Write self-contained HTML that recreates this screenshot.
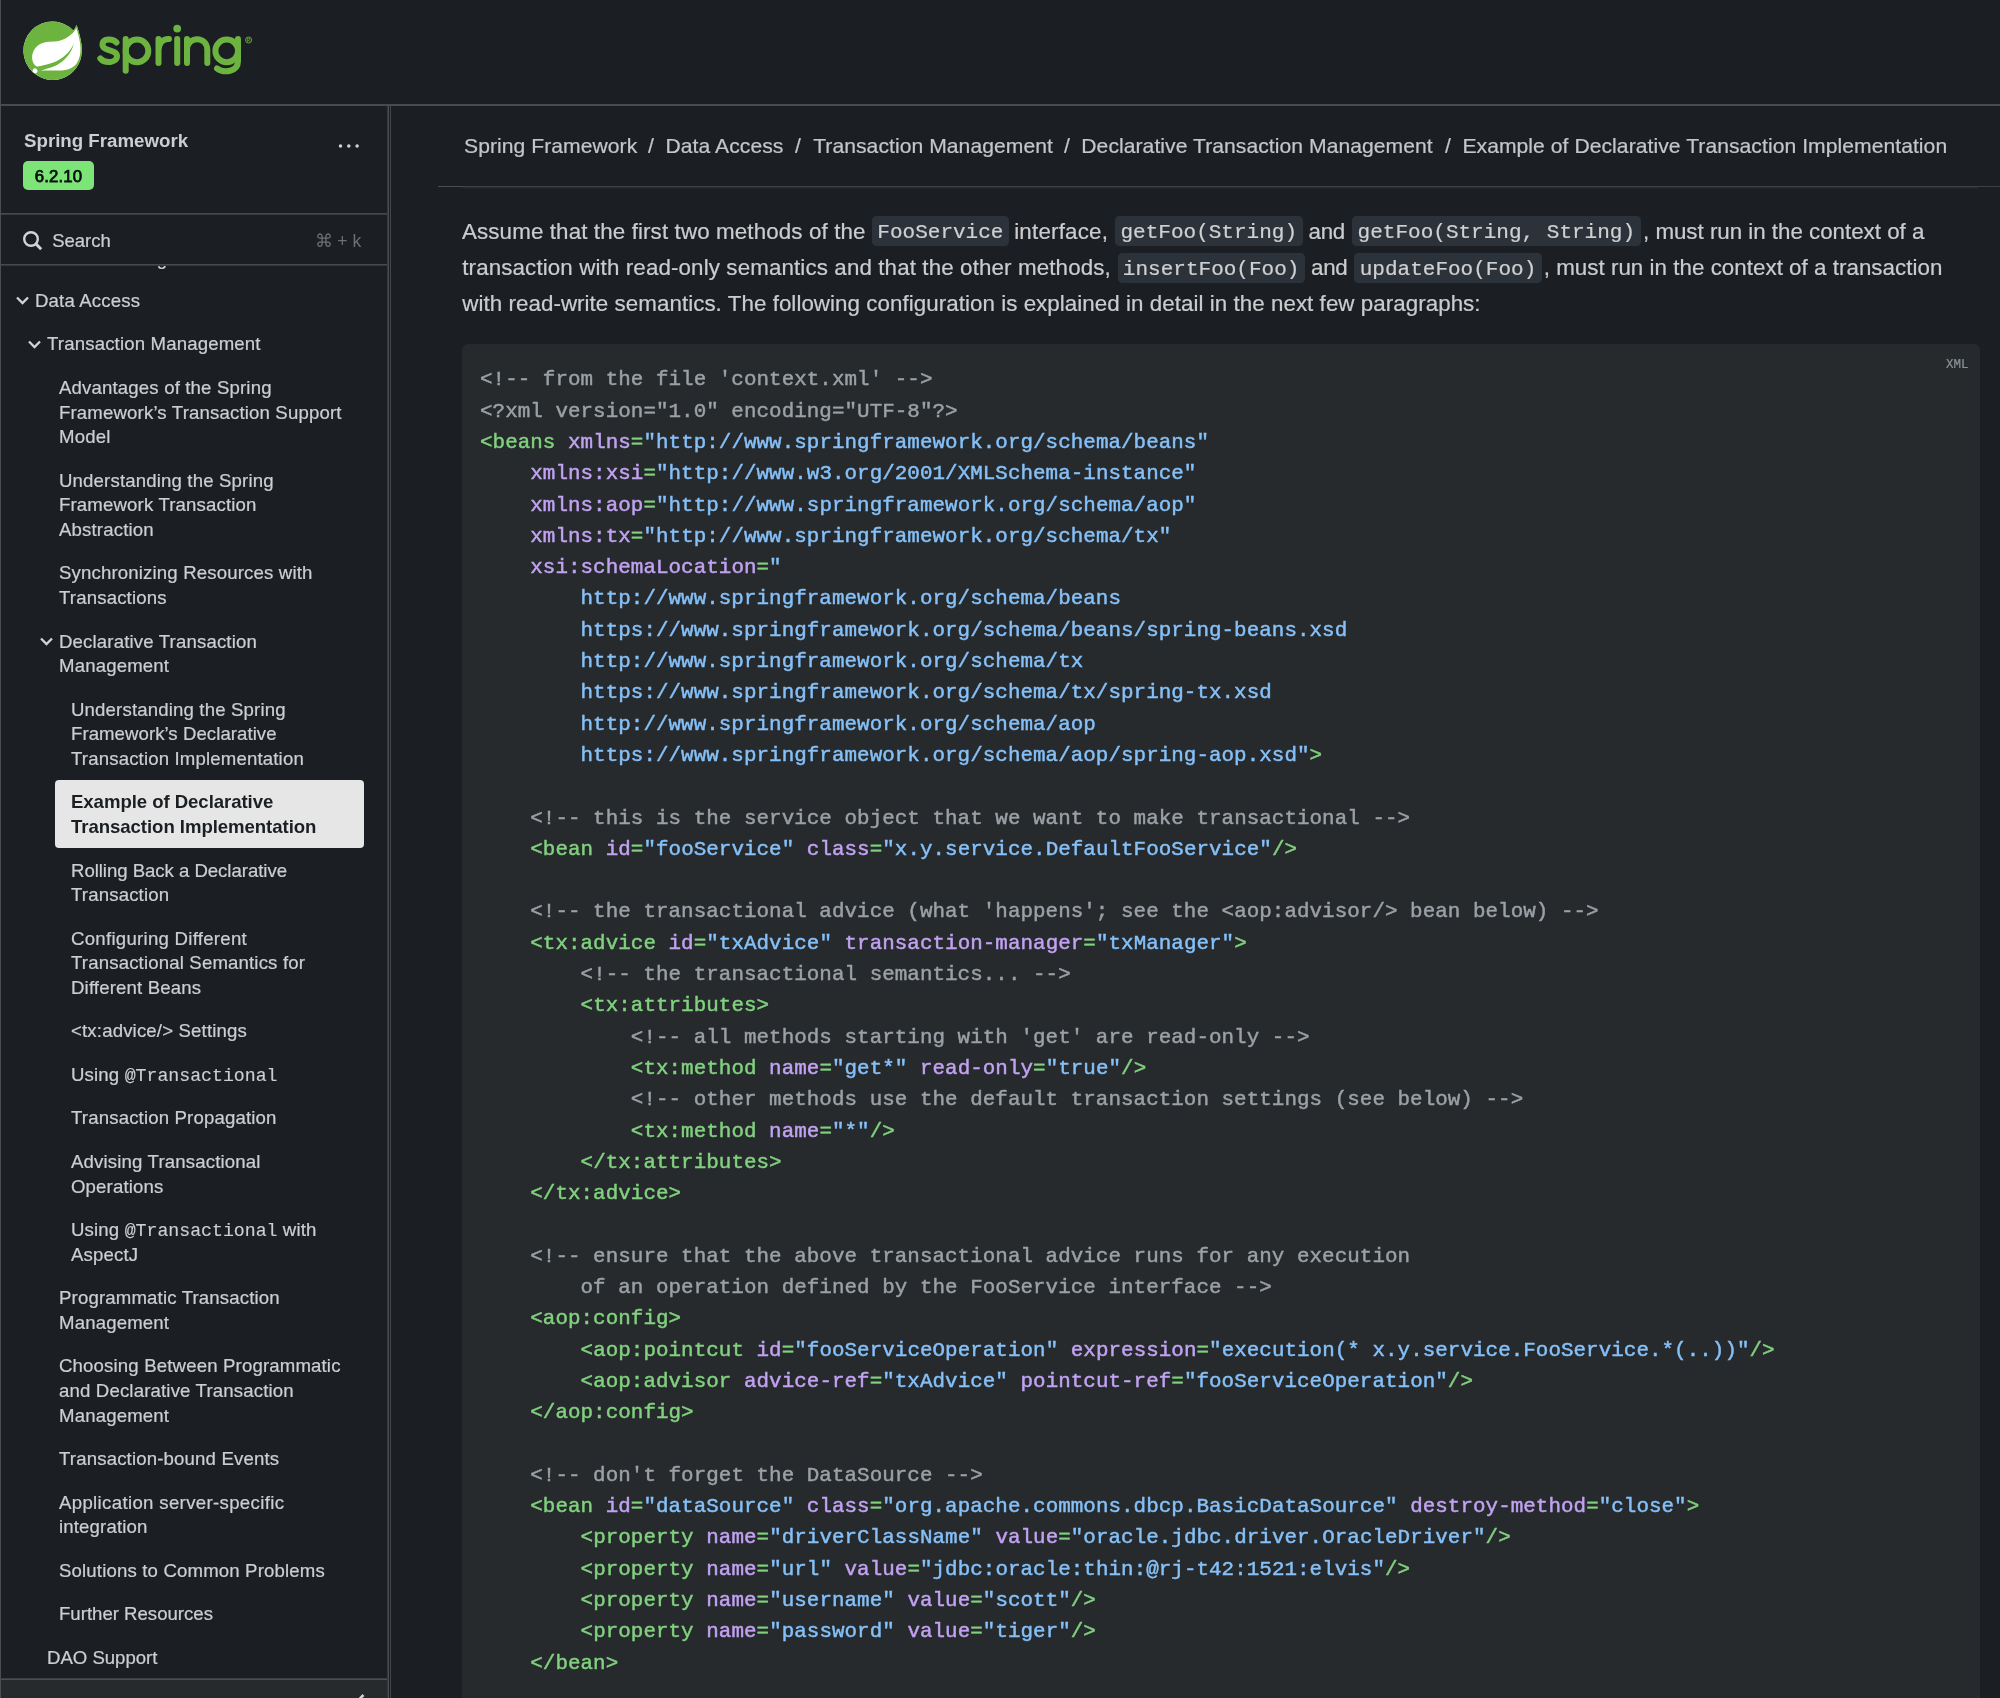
<!DOCTYPE html>
<html lang="en">
<head>
<meta charset="utf-8">
<title>Example of Declarative Transaction Implementation :: Spring Framework</title>
<style>
*{box-sizing:border-box;margin:0;padding:0}
html,body{width:2000px;height:1698px;overflow:hidden;background:#1b1f23}
body{position:relative;will-change:transform;-webkit-text-stroke:.22px;font-family:"Liberation Sans",sans-serif;color:#d3d4d6}
.abs{position:absolute}
/* ---------- frame lines ---------- */
#edge{left:0;top:0;width:1px;height:1698px;background:#4a4e52}
#hdr{left:0;top:0;width:2000px;height:104px}
#hdrline{left:0;top:104px;width:2000px;height:2px;background:#474b4f}
#vline1{left:387px;top:106px;width:2px;height:1592px;background:linear-gradient(to right,#34383c 0,#34383c 1px,#4b4f53 1px,#4b4f53 2px)}
#vline2{left:390px;top:106px;width:1px;height:1592px;background:#43474b}
/* ---------- sidebar ---------- */
#side{left:1px;top:106px;width:386px;height:1592px;overflow:hidden}
#side .title{left:23px;top:21.8px;font-size:18.7px;font-weight:bold;-webkit-text-stroke:0;color:#cdced0;white-space:nowrap;line-height:26px}
#side .badge{left:22px;top:55px;width:71px;height:28.5px;border-radius:5px;background:#7de578;color:#0c0f11;font-weight:normal;-webkit-text-stroke:.75px;font-size:16.8px;letter-spacing:.1px;line-height:32px;text-align:center}
#side .dots{left:336.7px;top:36.5px}
#side .sep1{left:0;top:107px;width:386px;height:2px;background:linear-gradient(#45494d 0,#45494d 1px,#383c40 1px,#383c40 2px)}
#side .sep2{left:0;top:158px;width:386px;height:2px;background:linear-gradient(#464a4e 0,#464a4e 1px,#34383c 1px,#34383c 2px)}
#side .search{left:51.2px;top:122px;font-size:18.5px;line-height:26px;color:#cdced0;white-space:nowrap}
#side .kbd{left:313.5px;top:122px;font-size:17.5px;line-height:26px;color:#6b7075;-webkit-text-stroke:0;white-space:nowrap}
#side .mag{left:19.4px;top:122.1px}
#nav{left:0;top:159.5px;width:386px;height:1414px;overflow:hidden}
#nav ul{list-style:none;position:absolute;left:0;top:-29.5px;width:386px;z-index:0}
#nav li{position:relative;font-size:18.6px;letter-spacing:.16px;line-height:24.62px;padding:9.45px 0;color:#cdced0;white-space:nowrap}
#nav li.l1{padding-left:34px}
#nav li.l2{padding-left:46px}
#nav li.l3{padding-left:58px}
#nav li.l4{padding-left:70px}
#nav li svg{position:absolute;top:13.6px}
#nav li.active{color:#1b1f23;font-weight:bold;letter-spacing:-.06px;-webkit-text-stroke:0}
#nav li.active:before{content:"";position:absolute;left:54px;top:-1px;width:309px;height:67.6px;border-radius:4px;background:#e6e6e6;z-index:-1}
#nav code{font-family:"Liberation Mono",monospace;font-size:18.2px;-webkit-text-stroke:.15px;line-height:0;letter-spacing:0}
#sfoot{left:0;top:1572px;width:386px;height:20px;background:linear-gradient(#3a3e42 0,#3a3e42 1px,#4b4f53 1px,#4b4f53 2px,#262a2d 2px)}
/* ---------- main ---------- */
#crumbs{left:438px;top:106px;width:1562px;height:81px}
#crumbline{left:438px;top:186px;width:1562px;height:1px;background:linear-gradient(to right,#4a4e52 0,#4a4e52 25px,#3d4145 25px)}
#crumbshadow{left:463px;top:187px;width:1515px;height:2px;background:linear-gradient(#2a2e32 0,#2a2e32 1px,#202428 1px)}
#crumbs span{position:absolute;top:26.7px;font-size:21.1px;letter-spacing:.06px;line-height:26px;color:#c5c6c8;white-space:nowrap}
#para span,#para code{position:absolute;white-space:pre}
#para span{font-size:22.35px;line-height:36px;color:#cbccce}
#para code{font-family:"Liberation Mono",monospace;font-size:21.03px;line-height:33.8px;height:30px;text-align:center;background:#2c323a;border-radius:4.5px;color:#cfd0d2}
#para .l1{top:213.7px}#para .l2{top:250px}#para .l3{top:286.45px}
#para code.l1{top:216.3px}#para code.l2{top:252.7px}
#codeblk{left:462px;top:344px;width:1518px;height:1360px;background:#262a2d;border-radius:6px}
#codeblk pre{position:absolute;left:18px;top:20.4px;font-family:"Liberation Mono",monospace;font-size:20.86px;letter-spacing:.051px;line-height:31.29px;-webkit-text-stroke:.45px;color:#9ba1a7;white-space:pre}
#codeblk .lang{position:absolute;right:11.5px;top:12.5px;font-family:"Liberation Mono",monospace;font-size:12.5px;line-height:16px;color:#8b9096}
.c{color:#9ba1a7}.t{color:#82d17f}.a{color:#c2a2f2}.s{color:#86c0f8}
</style>
</head>
<body>
<div id="edge" class="abs"></div>
<div id="hdr" class="abs">
<svg class="abs" style="left:0;top:0" width="280" height="104" viewBox="0 0 280 104">
<g id="leaf" transform="translate(23.4,21.55) scale(2.435)">
<path fill="#fff" d="M21.8537 1.4158a10.4504 10.4504 0 0 1-1.284 2.2471A11.9666 11.9666 0 1 0 3.8518 20.7757l.4445.3951a11.9543 11.9543 0 0 0 19.6316-8.2971c.3457-3.0126-.568-6.8649-2.0743-11.458z"/>
<path fill="#6db33f" d="M21.8537 1.4158a10.4504 10.4504 0 0 1-1.284 2.2471A11.9666 11.9666 0 1 0 3.8518 20.7757l.4445.3951a11.9543 11.9543 0 0 0 19.6316-8.2971c.3457-3.0126-.568-6.8649-2.0743-11.458zM5.5805 20.8745a1.0174 1.0174 0 1 1-.1482-1.4323 1.0396 1.0396 0 0 1 .1482 1.4323zm16.1991-3.5806c-2.9385 3.9263-9.2601 2.5928-13.2852 2.7904 0 0-.7161.0494-1.4323.1481 0 0 .2717-.1234.6174-.2469 2.8398-.9877 4.1732-1.1853 5.9018-2.0743 3.2349-1.6545 6.4698-5.2844 7.1118-9.0379-1.2347 3.6053-4.9881 6.7167-8.3959 7.9761-2.3459.8643-6.5685 1.7039-6.5685 1.7039l-.1729-.0988c-2.8645-1.4076-2.9632-7.6304 2.2718-9.6306 2.2966-.889 4.4696-.395 6.9637-.9877 2.6422-.6174 5.7043-2.5929 6.939-5.1857 1.3828 4.1732 3.062 10.643.0493 14.6434z"/>
</g>
<g id="word" fill="none" stroke="#6db33f" stroke-width="6" stroke-linecap="round" stroke-linejoin="round">
<path d="M116.5 42.5c-3-3.6-13.5-5-14 1.8c-.5 7.5 14.5 4.500 14.500 11.7c0 7.500-12.500 7.500-16.700 2.500"/>
<path d="M125.700 39v31.700"/><circle cx="137" cy="50.900" r="11.300"/>
<path d="M158.500 39v24M158.500 50c0-7 5-11.500 10.500-11"/>
<path d="M177.200 39v24"/>
<path d="M187 39v24M187 50c0-14.500 20.300-14.500 20.300 0v13"/>
<circle cx="226.700" cy="50.900" r="11.300"/><path d="M238 39v22c0 11-14 12.500-21 7.500"/>
</g>
<circle cx="177.200" cy="28.600" r="3.900" fill="#6db33f"/>
<circle cx="248.600" cy="40" r="3" fill="none" stroke="#6db33f" stroke-width="0.9"/>
<path d="M247.600 41.700v-3.400h1.200a1 1 0 0 1 0 2h-1.200m1.200 0l1 1.400" fill="none" stroke="#6db33f" stroke-width="0.700"/>
</svg>
</div>
<div id="hdrline" class="abs"></div>
<div id="vline1" class="abs"></div>
<div id="vline2" class="abs"></div>

<div id="side" class="abs">
<div class="abs title">Spring Framework</div>
<svg class="abs dots" width="24" height="6" viewBox="0 0 24 6"><circle cx="2.500" cy="3" r="1.750" fill="#d3d4d6"/><circle cx="10.800" cy="3" r="1.750" fill="#d3d4d6"/><circle cx="19.100" cy="3" r="1.750" fill="#d3d4d6"/></svg>
<div class="abs badge">6.2.10</div>
<div class="abs sep1"></div>
<svg class="abs mag" width="26" height="26" viewBox="0 0 26 26" fill="none" stroke="#d3d4d6" stroke-width="2.400"><circle cx="11" cy="11" r="6.800"/><path d="M15.800 15.800l5.400 5.400" stroke-width="3"/></svg>
<div class="abs search">Search</div>
<div class="abs kbd">&#8984; + k</div>
<div class="abs sep2"></div>
<div id="nav" class="abs">
<ul>
<li class="l1" style="top:1.500px">Core Technologies</li>
<li class="l1"><svg style="left:14.100px" width="15" height="15" viewBox="0 0 15 15" fill="none" stroke="#d3d4d6" stroke-width="2.300"><path d="M2 4.500l5.500 5.500l5.500-5.500"/></svg>Data Access</li>
<li class="l2"><svg style="left:26.100px" width="15" height="15" viewBox="0 0 15 15" fill="none" stroke="#d3d4d6" stroke-width="2.300"><path d="M2 4.500l5.500 5.500l5.500-5.500"/></svg>Transaction Management</li>
<li class="l3">Advantages of the Spring<br>Framework&rsquo;s Transaction Support<br>Model</li>
<li class="l3">Understanding the Spring<br>Framework Transaction<br>Abstraction</li>
<li class="l3">Synchronizing Resources with<br>Transactions</li>
<li class="l3"><svg style="left:38.100px" width="15" height="15" viewBox="0 0 15 15" fill="none" stroke="#d3d4d6" stroke-width="2.300"><path d="M2 4.500l5.500 5.500l5.500-5.500"/></svg>Declarative Transaction<br>Management</li>
<li class="l4">Understanding the Spring<br><span style="letter-spacing:.06px">Framework&rsquo;s Declarative</span><br>Transaction Implementation</li>
<li class="l4 active">Example of Declarative<br>Transaction Implementation</li>
<li class="l4"><span style="letter-spacing:-.04px">Rolling Back a Declarative</span><br>Transaction</li>
<li class="l4"><span style="letter-spacing:.275px">Configuring Different</span><br>Transactional Semantics for<br>Different Beans</li>
<li class="l4">&lt;tx:advice/&gt; Settings</li>
<li class="l4">Using <code>@Transactional</code></li>
<li class="l4">Transaction Propagation</li>
<li class="l4">Advising Transactional<br>Operations</li>
<li class="l4">Using <code>@Transactional</code> with<br>AspectJ</li>
<li class="l3">Programmatic Transaction<br>Management</li>
<li class="l3">Choosing Between Programmatic<br>and Declarative Transaction<br>Management</li>
<li class="l3">Transaction-bound Events</li>
<li class="l3"><span style="letter-spacing:.345px">Application server-specific</span><br>integration</li>
<li class="l3">Solutions to Common Problems</li>
<li class="l3" style="letter-spacing:0">Further Resources</li>
<li class="l2" style="letter-spacing:-.02px">DAO Support</li>
</ul>
</div>
<div id="sfoot" class="abs"><svg class="abs" style="left:351px;top:13.500px" width="16" height="16" viewBox="0 0 16 16" fill="none" stroke="#d0d1d3" stroke-width="2.600"><path d="M11.500 3l-6 6l6 6"/></svg></div>
</div>

<div id="crumbline" class="abs"></div><div id="crumbshadow" class="abs"></div>
<div id="crumbs" class="abs">
<span style="left:26px">Spring Framework</span><span style="left:210px">/</span>
<span style="left:227.5px">Data Access</span><span style="left:357px">/</span>
<span style="left:375.2px">Transaction Management</span><span style="left:626px">/</span>
<span style="left:643.3px">Declarative Transaction Management</span><span style="left:1007px">/</span>
<span style="left:1024.4px">Example of Declarative Transaction Implementation</span>
</div>

<p id="para">
<span class="l1" style="left:462px;letter-spacing:.123px">Assume that the first two methods of the</span>
<code class="l1" style="left:872px;width:136.8px">FooService</code>
<span class="l1" style="left:1014.2px;letter-spacing:.2px">interface,</span>
<code class="l1" style="left:1115px;width:187.5px">getFoo(String)</code>
<span class="l1" style="left:1308.6px;letter-spacing:-.3px">and</span>
<code class="l1" style="left:1352px;width:288.7px">getFoo(String, String)</code>
<span class="l1" style="left:1643px;letter-spacing:-.02px">, must run in the context of a</span>
<span class="l2" style="left:462.3px;letter-spacing:.12px">transaction with read-only semantics and that the other methods,</span>
<code class="l2" style="left:1117.5px;width:187.3px">insertFoo(Foo)</code>
<span class="l2" style="left:1311px;letter-spacing:-.3px">and</span>
<code class="l2" style="left:1354px;width:188px">updateFoo(Foo)</code>
<span class="l2" style="left:1543.7px;letter-spacing:.03px">, must run in the context of a transaction</span>
<span class="l3" style="left:462.3px;letter-spacing:.05px">with read-write semantics. The following configuration is explained in detail in the next few paragraphs:</span>
</p>

<div id="codeblk" class="abs">
<span class="lang">XML</span>
<pre><span class="c">&lt;!-- from the file 'context.xml' --&gt;</span>
<span class="c">&lt;?xml version="1.0" encoding="UTF-8"?&gt;</span>
<span class="t">&lt;beans</span> <span class="a">xmlns</span><span class="t">=</span><span class="s">"http://www.springframework.org/schema/beans"</span>
    <span class="a">xmlns:xsi</span><span class="t">=</span><span class="s">"http://www.w3.org/2001/XMLSchema-instance"</span>
    <span class="a">xmlns:aop</span><span class="t">=</span><span class="s">"http://www.springframework.org/schema/aop"</span>
    <span class="a">xmlns:tx</span><span class="t">=</span><span class="s">"http://www.springframework.org/schema/tx"</span>
    <span class="a">xsi:schemaLocation</span><span class="t">=</span><span class="s">"
        http://www.springframework.org/schema/beans
        https://www.springframework.org/schema/beans/spring-beans.xsd
        http://www.springframework.org/schema/tx
        https://www.springframework.org/schema/tx/spring-tx.xsd
        http://www.springframework.org/schema/aop
        https://www.springframework.org/schema/aop/spring-aop.xsd"</span><span class="t">&gt;</span>

    <span class="c">&lt;!-- this is the service object that we want to make transactional --&gt;</span>
    <span class="t">&lt;bean</span> <span class="a">id</span><span class="t">=</span><span class="s">"fooService"</span> <span class="a">class</span><span class="t">=</span><span class="s">"x.y.service.DefaultFooService"</span><span class="t">/&gt;</span>

    <span class="c">&lt;!-- the transactional advice (what 'happens'; see the &lt;aop:advisor/&gt; bean below) --&gt;</span>
    <span class="t">&lt;tx:advice</span> <span class="a">id</span><span class="t">=</span><span class="s">"txAdvice"</span> <span class="a">transaction-manager</span><span class="t">=</span><span class="s">"txManager"</span><span class="t">&gt;</span>
        <span class="c">&lt;!-- the transactional semantics... --&gt;</span>
        <span class="t">&lt;tx:attributes&gt;</span>
            <span class="c">&lt;!-- all methods starting with 'get' are read-only --&gt;</span>
            <span class="t">&lt;tx:method</span> <span class="a">name</span><span class="t">=</span><span class="s">"get*"</span> <span class="a">read-only</span><span class="t">=</span><span class="s">"true"</span><span class="t">/&gt;</span>
            <span class="c">&lt;!-- other methods use the default transaction settings (see below) --&gt;</span>
            <span class="t">&lt;tx:method</span> <span class="a">name</span><span class="t">=</span><span class="s">"*"</span><span class="t">/&gt;</span>
        <span class="t">&lt;/tx:attributes&gt;</span>
    <span class="t">&lt;/tx:advice&gt;</span>

    <span class="c">&lt;!-- ensure that the above transactional advice runs for any execution
        of an operation defined by the FooService interface --&gt;</span>
    <span class="t">&lt;aop:config&gt;</span>
        <span class="t">&lt;aop:pointcut</span> <span class="a">id</span><span class="t">=</span><span class="s">"fooServiceOperation"</span> <span class="a">expression</span><span class="t">=</span><span class="s">"execution(* x.y.service.FooService.*(..))"</span><span class="t">/&gt;</span>
        <span class="t">&lt;aop:advisor</span> <span class="a">advice-ref</span><span class="t">=</span><span class="s">"txAdvice"</span> <span class="a">pointcut-ref</span><span class="t">=</span><span class="s">"fooServiceOperation"</span><span class="t">/&gt;</span>
    <span class="t">&lt;/aop:config&gt;</span>

    <span class="c">&lt;!-- don't forget the DataSource --&gt;</span>
    <span class="t">&lt;bean</span> <span class="a">id</span><span class="t">=</span><span class="s">"dataSource"</span> <span class="a">class</span><span class="t">=</span><span class="s">"org.apache.commons.dbcp.BasicDataSource"</span> <span class="a">destroy-method</span><span class="t">=</span><span class="s">"close"</span><span class="t">&gt;</span>
        <span class="t">&lt;property</span> <span class="a">name</span><span class="t">=</span><span class="s">"driverClassName"</span> <span class="a">value</span><span class="t">=</span><span class="s">"oracle.jdbc.driver.OracleDriver"</span><span class="t">/&gt;</span>
        <span class="t">&lt;property</span> <span class="a">name</span><span class="t">=</span><span class="s">"url"</span> <span class="a">value</span><span class="t">=</span><span class="s">"jdbc:oracle:thin:@rj-t42:1521:elvis"</span><span class="t">/&gt;</span>
        <span class="t">&lt;property</span> <span class="a">name</span><span class="t">=</span><span class="s">"username"</span> <span class="a">value</span><span class="t">=</span><span class="s">"scott"</span><span class="t">/&gt;</span>
        <span class="t">&lt;property</span> <span class="a">name</span><span class="t">=</span><span class="s">"password"</span> <span class="a">value</span><span class="t">=</span><span class="s">"tiger"</span><span class="t">/&gt;</span>
    <span class="t">&lt;/bean&gt;</span>
</pre>
</div>
</body>
</html>
